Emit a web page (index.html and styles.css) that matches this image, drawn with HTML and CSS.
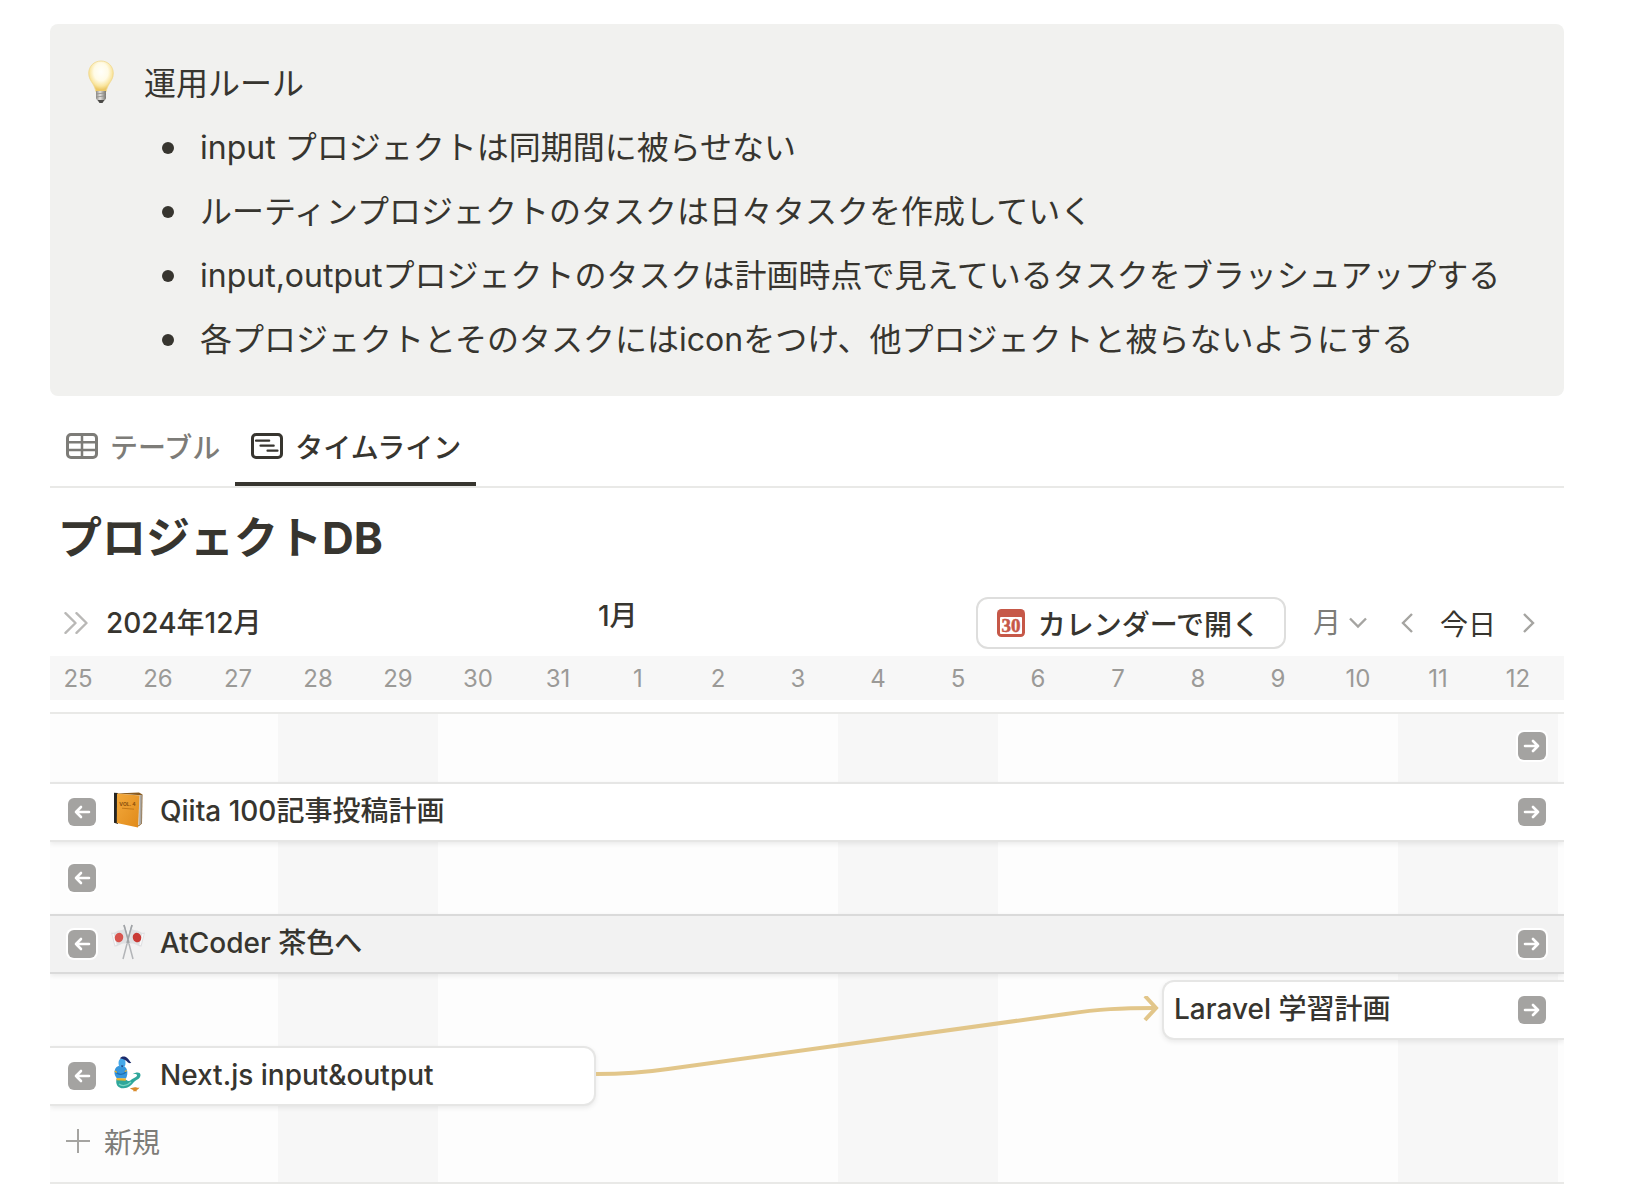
FILE: index.html
```html
<!DOCTYPE html>
<html lang="ja">
<head>
    <meta charset="UTF-8">
    <meta name="viewport" content="width=device-width, initial-scale=1.0">
    <title>プロジェクトDB</title>
    <link rel="stylesheet" href="styles.css">
</head>
<body>

<!-- shared icons -->
<svg class="defs" width="0" height="0" aria-hidden="true">
    <symbol id="arrow-left" viewBox="0 0 28 28">
        <path d="M21 14H8M13 9l-5 5 5 5" fill="none" stroke="currentColor" stroke-width="2.6" stroke-linecap="round" stroke-linejoin="round"/>
    </symbol>
    <symbol id="arrow-right" viewBox="0 0 28 28">
        <path d="M7 14h13M15 9l5 5-5 5" fill="none" stroke="currentColor" stroke-width="2.6" stroke-linecap="round" stroke-linejoin="round"/>
    </symbol>
</svg>

<main class="page">
    <section class="callout">
        <svg class="callout-icon" width="26" height="44" viewBox="0 0 26 44" aria-hidden="true">
            <defs>
                <radialGradient id="glass" cx="50%" cy="36%" r="58%">
                    <stop offset="0" stop-color="#fffffa"/>
                    <stop offset="0.5" stop-color="#fffbe6"/>
                    <stop offset="0.8" stop-color="#fae6a0"/>
                    <stop offset="1" stop-color="#ecc866"/>
                </radialGradient>
                <linearGradient id="metal" x1="0" x2="1" y1="0" y2="0">
                    <stop offset="0" stop-color="#8c8a86"/>
                    <stop offset="0.4" stop-color="#e4e2de"/>
                    <stop offset="1" stop-color="#77756f"/>
                </linearGradient>
            </defs>
            <path d="M13 1C6 1 .7 6.300.7 13.200c0 4.600 2 7.300 3.900 10.300 1.700 2.700 2.600 5 3.200 8h10.400c.6-3 1.500-5.300 3.200-8 1.900-3 3.900-5.700 3.900-10.300C25.300 6.300 20 1 13 1z" fill="url(#glass)" stroke="#f0d88f" stroke-width="0.800"/>
            <path d="M8 31h10v7c0 1.500-1.500 2.400-2.600 3h-4.800C9.500 40.400 8 39.500 8 38z" fill="url(#metal)"/>
            <path d="M8 34l10-1.200M8 37l10-1.200" stroke="#8e8b86" stroke-width="0.8"/>
            <path d="M9.500 40h7l-2 3h-3z" fill="#4b4a47"/>
        </svg>
        <div class="callout-body">
            <p>運用ルール</p>
            <ul>
                <li>input プロジェクトは同期間に被らせない</li>
                <li>ルーティンプロジェクトのタスクは日々タスクを作成していく</li>
                <li>input,outputプロジェクトのタスクは計画時点で見えているタスクをブラッシュアップする</li>
                <li>各プロジェクトとそのタスクにはiconをつけ、他プロジェクトと被らないようにする</li>
            </ul>
        </div>
    </section>

    <nav class="tabs">
        <button class="tab">
            <svg width="32" height="26" viewBox="0 0 32 26" fill="none" stroke="currentColor" stroke-width="3" aria-hidden="true">
                <rect x="1.500" y="1.500" width="29" height="23" rx="3.500"/>
                <path d="M2 9.200h28M2 17h28M16 2v22" stroke-width="2.500"/>
            </svg>
            テーブル
        </button>
        <button class="tab active">
            <svg width="32" height="26" viewBox="0 0 32 26" fill="none" stroke="currentColor" stroke-width="3" aria-hidden="true">
                <rect x="1.500" y="1.500" width="29" height="23" rx="3.500"/>
                <path d="M5 7.700h13.200M9.500 12.700h13.200M16.500 17.700h10" stroke-width="2.200" stroke-linecap="round"/>
            </svg>
            タイムライン
        </button>
    </nav>

    <h2 class="title">プロジェクトDB</h2>

    <header class="toolbar">
        <button class="icon-button expand" aria-label="テーブルを表示">
            <svg width="24" height="22" viewBox="0 0 24 22" fill="none" stroke="#b9b8b6" stroke-width="2.400" stroke-linecap="round" stroke-linejoin="round">
                <path d="M1.500 1.200l10 9.800-10 9.800M12.500 1.200l10 9.800-10 9.800"/>
            </svg>
        </button>
        <span class="month">2024年12月</span>
        <span class="month next-month">1月</span>
        <div class="controls">
            <button class="calendar-button">
                <svg width="28" height="28" viewBox="0 0 28 28" aria-hidden="true">
                    <rect width="28" height="28" rx="4.500" fill="#c65848"/>
                    <rect x="3" y="8" width="22" height="17" rx="1" fill="#fff"/>
                    <text x="14" y="23" text-anchor="middle" class="calendar-day">30</text>
                </svg>
                カレンダーで開く
            </button>
            <div class="scale">
                <select aria-label="表示単位">
                    <option>月</option>
                    <option>週</option>
                </select>
                <svg width="18" height="12" viewBox="0 0 18 12" fill="none" stroke="#a5a4a1" stroke-width="2.400" aria-hidden="true">
                    <path d="M1 1.500l8 8 8-8"/>
                </svg>
            </div>
            <button class="icon-button" aria-label="前へ">
                <svg width="12" height="20" viewBox="0 0 12 20" fill="none" stroke="#a5a4a1" stroke-width="2.400"><path d="M11 1l-9 9 9 9"/></svg>
            </button>
            <button class="today">今日</button>
            <button class="icon-button" aria-label="次へ">
                <svg width="12" height="20" viewBox="0 0 12 20" fill="none" stroke="#a5a4a1" stroke-width="2.400"><path d="M1 1l9 9-9 9"/></svg>
            </button>
        </div>
    </header>

    <div class="days">
        <span>25</span><span>26</span><span>27</span><span>28</span><span>29</span><span>30</span><span>31</span>
        <span>1</span><span>2</span><span>3</span><span>4</span><span>5</span><span>6</span><span>7</span>
        <span>8</span><span>9</span><span>10</span><span>11</span><span>12</span>
    </div>

    <section class="timeline">
        <div class="row">
            <button class="jump right" aria-label="右へ移動"><svg><use href="#arrow-right"/></svg></button>
        </div>
        <div class="row">
            <div class="bar full">
                <button class="jump" aria-label="左へ移動"><svg><use href="#arrow-left"/></svg></button>
                <svg class="emoji" width="36" height="36" viewBox="0 0 36 36" aria-hidden="true">
                    <defs>
                        <linearGradient id="cover" x1="0" x2="1" y1="0" y2="1">
                            <stop offset="0" stop-color="#f3a93c"/>
                            <stop offset="1" stop-color="#e08a1a"/>
                        </linearGradient>
                    </defs>
                    <path d="M5 1.500L29 .5l3.500 2-.5 29-3.500 3z" fill="#8a5a1c"/>
                    <path d="M8 1.500l23 1.700-.3 28.500-2.700 2z" fill="#dcdad6"/>
                    <path d="M30 3.500l1.800-.8-.3 28.800-2.300 1.500z" fill="#a9a7a3"/>
                    <path d="M4 .8L8 1v31l-4-1.300z" fill="#262522"/>
                    <path d="M7 1.500l22.500 2L28 35.500 6.800 31z" fill="url(#cover)"/>
                    <text x="17.500" y="14" text-anchor="middle" class="cover-text">VOL. 4</text>
                    <path d="M12 16.200l12 1" stroke="#b86e12" stroke-width="0.800"/>
                </svg>
                <span>Qiita 100記事投稿計画</span>
                <button class="jump right" aria-label="右へ移動"><svg><use href="#arrow-right"/></svg></button>
            </div>
        </div>
        <div class="row">
            <button class="jump" aria-label="左へ移動"><svg><use href="#arrow-left"/></svg></button>
        </div>
        <div class="row">
            <div class="bar full hovered">
                <button class="jump" aria-label="左へ移動"><svg><use href="#arrow-left"/></svg></button>
                <svg class="emoji" width="36" height="36" viewBox="0 0 36 36" aria-hidden="true">
                    <path d="M14 1l9 34M22 1l-9 34" stroke="#b3b5b8" stroke-width="1.500"/>
                    <path d="M15 4c-3 3.500-6 1.500-8.500 3.500-2 1.300-3.500 1.500-5.500 1l3.500 14c3 .5 4.500-1.500 7-2.500s4.500 0 6.500-1z" fill="#dfe0e2"/>
                    <path d="M21 4c3 3.500 6 1.500 8.500 3.500 2 1.300 3.500 1.500 5.500 1l-3.500 14c-3 .5-4.500-1.500-7-2.500s-4.500 0-6.500-1z" fill="#dfe0e2"/>
                    <path d="M3 10l3 11M33 10l-3 11" stroke="#f9f9fa" stroke-width="1.500"/>
                    <ellipse cx="9" cy="13.500" rx="4.200" ry="4.800" fill="#d7544e" transform="rotate(20 9 13.500)"/>
                    <ellipse cx="27" cy="13.500" rx="4.200" ry="4.800" fill="#c93a35" transform="rotate(-20 27 13.500)"/>
                    <path d="M14 1l5 18M22 1l-5 18" stroke="#a0a3a6" stroke-width="1.500"/>
                </svg>
                <span>AtCoder 茶色へ</span>
                <button class="jump right" aria-label="右へ移動"><svg><use href="#arrow-right"/></svg></button>
            </div>
        </div>
        <div class="row">
            <div class="bar laravel">
                <span>Laravel 学習計画</span>
                <button class="jump right" aria-label="右へ移動"><svg><use href="#arrow-right"/></svg></button>
            </div>
        </div>
        <div class="row">
            <div class="bar nextjs">
                <button class="jump" aria-label="左へ移動"><svg><use href="#arrow-left"/></svg></button>
                <svg class="emoji" width="36" height="36" viewBox="0 0 36 36" aria-hidden="true">
                    <!-- tail -->
                    <path d="M7 23c-1 5 1 8.500 6 9 6 .5 9-2.500 11.500-7 1.500-2.500 4-3 5-5.500.8-2-1-3.300-4-2.500-1.500.4-2.500 1-3.500 2" fill="none"/>
                    <path d="M6.500 23c-1.200 5.500 1.500 9.500 7 9.300 5-.2 8-3.300 10.500-6.300 2-2.200 6.500-3 6.500-7 0-2.800-4-3.300-8-.8 2.500-.4 4.500-.2 4.500 1 0 2-3.500 2.800-5.500 4.300-2 1.500-3.500 2.500-5 .5z" fill="#2fa79b"/>
                    <path d="M9 28c3 2.500 8 2 12-2" stroke="#79d4c2" stroke-width="1.300" fill="none"/>
                    <path d="M8.500 10c-3 1-4.300 4-4 7.300.3 2.500 1.500 4 2.500 5.200h9c1.200-2.500 2-6 .8-9-.8-2-2.500-3.500-4.300-3.500z" fill="#3796dc"/>
                    <path d="M6 16.500c3 2.500 7 2.500 10-.5" stroke="#1d6fb3" stroke-width="1.500" fill="none"/>
                    <ellipse cx="12" cy="7" rx="3.500" ry="4.600" fill="#45a8ea"/>
                    <path d="M10 2.500c1.500-2.500 5-2.300 7-.7 2.500 1.800 2.500 4 4.300 5-1.500.8-3 .3-3.800-.8C16.500 4.500 14 3 10 2.500z" fill="#1a2a6c"/>
                    <path d="M11 9.500h2.500L12 11.500z" fill="#1a2a6c"/>
                    <path d="M6.500 22l9.500.5-.3 2.300-9-.5z" fill="#f0b429"/>
                    <path d="M4.800 15l2 1.500M14.800 15.500l2-1" stroke="#f0b429" stroke-width="1.300"/>
                    <!-- lamp -->
                    <path d="M20 32c2 0 3-.8 5-.8s2 .8 4.500.3c-.8 1.800-2 2.200-3 2.400l.5 1.300h-4l.5-1.300c-1.500-.3-2.700-.8-3.500-1.900z" fill="#d98a2b"/>
                </svg>
                <span>Next.js input&amp;output</span>
            </div>
        </div>
        <div class="row">
            <button class="new-item">
                <svg width="24" height="24" viewBox="0 0 24 24" stroke="#a5a4a1" stroke-width="2" aria-hidden="true"><path d="M12 0v24M0 12h24"/></svg>
                新規
            </button>
        </div>

        <!-- dependency: Next.js -> Laravel -->
        <svg class="connector" width="564" height="88" viewBox="0 0 564 88" fill="none" stroke="#e2c68a" stroke-width="4" aria-hidden="true">
            <path d="M0 78c30 0 45-1 72-5L470 18c34-5 54-6 90-6"/>
            <path d="M549 0l11 12-11 12"/>
        </svg>
    </section>
</main>

</body>
</html>
```

FILE: styles.css
```css
* {
    box-sizing: border-box;
}
body {
    margin: 0;
    background-color: #fff;
    color: #37352f;
    font-family: Inter, 'Noto Sans CJK JP', sans-serif;
    font-size: 28px;
}
button, select {
    margin: 0;
    padding: 0;
    border: none;
    background: none;
    color: inherit;
    font: inherit;
    cursor: pointer;
}
svg {
    flex-shrink: 0;
}
.defs {
    position: absolute;
}
.page {
    margin: 24px 70px 12px 50px;
}

/* callout */
.callout {
    display: flex;
    padding: 28px 36px 24px 38px;
    border-radius: 8px;
    background: #f1f1ef;
    font-size: 32px;
    line-height: 64px;
}
.callout-icon {
    margin: 8px 30px 0 0;
}
.callout p, .callout ul {
    margin: 0;
    padding: 0;
    list-style: none;
}
.callout li {
    display: flex;
    align-items: center;
    gap: 26px;
    padding-left: 18px;
    white-space: nowrap;
}
.callout li::before {
    content: "";
    width: 12px;
    height: 12px;
    border-radius: 50%;
    background: #37352f;
}

/* view tabs */
.tabs {
    display: flex;
    margin-top: 8px;
    border-bottom: 2px solid #e9e9e7;
}
.tab {
    display: flex;
    align-items: center;
    gap: 12px;
    height: 82px;
    padding: 5px 15px 0 16px;
    border-bottom: 4px solid transparent;
    color: #7d7c78;
    font-weight: 500;
}
.tab.active {
    border-bottom-color: #37352f;
    color: #37352f;
}
.title {
    margin: 24px 8px 32px;
    font-size: 44px;
    line-height: 52px;
    font-weight: 700;
}

/* timeline toolbar */
.toolbar {
    display: flex;
    align-items: center;
    height: 53px;
    margin-bottom: 7px;
}
.icon-button {
    display: flex;
    align-items: center;
    justify-content: center;
    width: 40px;
    height: 40px;
}
.expand {
    width: 24px;
    margin: 0 18px 0 14px;
}
.month {
    width: 492px;
    line-height: 40px;
    font-weight: 500;
}
.next-month {
    align-self: flex-start;
    width: auto;
}
.controls {
    display: flex;
    align-items: center;
    gap: 13px;
    margin-left: auto;
    padding-right: 15px;
}
.calendar-button {
    display: flex;
    align-items: center;
    gap: 13px;
    height: 52px;
    margin-right: 14px;
    padding: 0 24px 0 19px;
    border: 2px solid #dededd;
    border-radius: 12px;
    font-weight: 500;
}
.calendar-day {
    fill: #c65848;
    stroke: #c65848;
    stroke-width: 0.5px;
    font-family: 'Liberation Serif', serif;
    font-size: 19px;
    font-weight: 700;
}
.scale {
    display: flex;
    align-items: center;
    margin-right: 7px;
    color: #7d7c78;
}
.scale select {
    appearance: none;
    width: 56px;
    margin-right: -20px;
}
.scale svg {
    pointer-events: none;
}

/* day numbers, 80px per day */
.days {
    display: flex;
    height: 44px;
    padding-right: 6px;
    overflow: hidden;
    background: #f7f7f7;
    color: #9b9a97;
    font-size: 24px;
    line-height: 46px;
}
.days span {
    flex: 0 0 80px;
    text-align: center;
}
.days span:first-child {
    margin-left: -12px;
}

/* timeline body, weekends shaded */
.timeline {
    position: relative;
    margin-top: 12px;
    padding-bottom: 6px;
    overflow: hidden;
    border-top: 2px solid #e9e9e7;
    border-bottom: 2px solid #e9e9e7;
    background: repeating-linear-gradient(to right, #fdfdfd 0 240px, #f7f7f7 240px 400px, #fdfdfd 400px 560px) -12px 0 / 2400px 100%;
}
.row {
    display: flex;
    align-items: center;
    height: 66px;
    padding: 2px 0 4px;
}
.bar {
    display: flex;
    align-items: center;
    height: 60px;
    border: 2px solid #e6e6e5;
    background: #fff;
    box-shadow: 0 2px 5px rgba(15, 15, 15, 0.08);
    font-weight: 500;
}
.bar.full {
    flex: 1;
    border-left: none;
    border-right: none;
}
.bar.hovered {
    border-color: #dadada;
    background: #f2f2f2;
}
.bar.laravel {
    flex: 1;
    margin-left: 1112px;
    padding-left: 10px;
    border-right: none;
    border-radius: 12px 0 0 12px;
}
.bar.nextjs {
    width: 546px;
    border-left: none;
    border-radius: 0 12px 12px 0;
}
.bar span {
    padding-bottom: 2px;
    line-height: 40px;
    white-space: nowrap;
}
.jump {
    width: 28px;
    height: 28px;
    margin-left: 18px;
    border-radius: 6px;
    background: #a4a3a1;
    box-shadow: 0 0 0 2px #fff;
    color: #fff;
}
.jump.right {
    margin-left: auto;
    margin-right: 18px;
}
.jump svg {
    display: block;
    width: 28px;
    height: 28px;
}
.emoji {
    margin: 0 14px 4px;
}
.cover-text {
    fill: #8a4f0c;
    font-size: 5px;
    font-weight: 700;
}
.new-item {
    display: flex;
    align-items: center;
    gap: 14px;
    margin-left: 16px;
    padding-bottom: 3px;
    color: #7d7c78;
}
.connector {
    position: absolute;
    left: 546px;
    top: 282px;
}
```
